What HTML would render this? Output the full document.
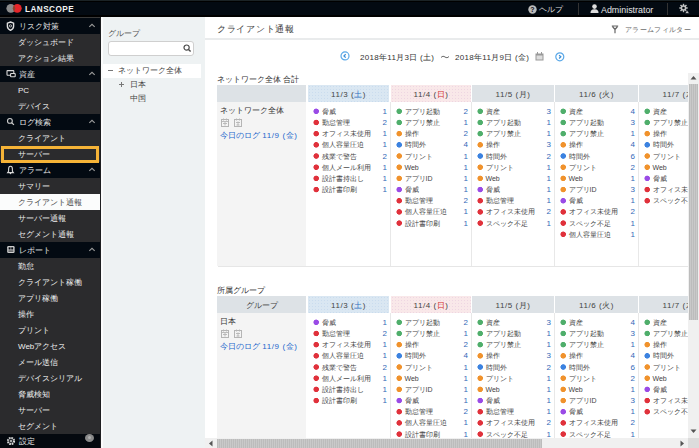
<!DOCTYPE html><html><head><meta charset="utf-8"><style>
*{margin:0;padding:0;box-sizing:border-box}
html,body{width:699px;height:448px;overflow:hidden;background:#fff;font-family:"Liberation Sans",sans-serif;position:relative}
div{position:absolute;white-space:nowrap}
.sh .st,.sh .car{position:absolute}
.j{display:inline-block;text-align:justify;text-align-last:justify;white-space:nowrap}
.top{left:0;top:0;width:699px;height:17px;background:#030a12;border-top:1px solid #1b2326;border-bottom:2px solid #000;box-shadow:inset 0 1px 0 #000}
.sb{left:0;top:17px;width:101px;height:431px;background:#2b2b2d}
.sh{left:0;width:101px;height:16px;background:#030a12;color:#e6e6e6;font-size:8px;line-height:17px}
.sh .st{left:19px;top:0}
.sic{position:absolute;left:6px;top:3px}
.car{left:87.8px;top:4.5px}
.si{left:0;width:101px;height:16px;color:#eeeeee;font-size:8px;line-height:17px;padding-left:18px}
.si.act{background:#fbfcfc;color:#4a4a4a}
.gp{left:101px;top:17px;width:104px;height:431px;background:#eef2f3}
.main{left:205px;top:17px;width:494px;height:431px;background:#fff}
.hd{height:17px;background:#dde2e6;color:#444;font-size:8px;line-height:19px;text-align:center;letter-spacing:0.55px}
.hd.sat{background-color:#dae7f2;background-image:radial-gradient(circle,#cadcee 0.7px,transparent 1px);background-size:3px 3px}
.hd.sun{background-color:#f9e8e9;background-image:radial-gradient(circle,#eed6e2 0.7px,transparent 1px);background-size:3px 3px}
.lc{background:#f4f4f4}
.lbl{left:217px;font-size:8px;color:#333;line-height:10px}
.lname{font-size:8px;color:#333;line-height:10px}
.link{font-size:8px;color:#2467cc;line-height:10px}
.ico{width:7px;height:8px;border:1px solid #bbb}
.bb{height:1px;background:#e6e6e6}
.vb{width:1px;background:#e8e8e8}
.dot{width:9px;height:9px}
.it{font-size:7px;color:#444;line-height:11px}
.num{width:19px;text-align:right;font-size:8px;color:#3468b8;line-height:11px}
</style></head><body>
<div class="top"></div>
<svg style="position:absolute;left:5px;top:3px" width="18" height="11" viewBox="0 0 18 11"><defs><clipPath id="cg"><circle cx="5.8" cy="5.3" r="4.4"></circle></clipPath></defs><circle cx="5.8" cy="5.3" r="4.4" fill="#8c8c8c"></circle><circle cx="12.3" cy="5.3" r="4.4" fill="#e5262a"></circle><circle cx="12.3" cy="5.3" r="4.4" fill="#8a4630" clip-path="url(#cg)"></circle></svg>
<div style="left:25px;top:4px;font-size:8.2px;letter-spacing:0.45px;font-weight:bold;color:#f4f4f4;line-height:11px">LANSCOPE</div>
<svg style="position:absolute;left:528px;top:5px" width="9" height="9" viewBox="0 0 9 9"><circle cx="4.5" cy="4.5" r="4.2" fill="#bbb"></circle><text x="4.5" y="7.3" font-size="7" font-weight="bold" text-anchor="middle" fill="#0a0d14" font-family="Liberation Sans">?</text></svg>
<div style="left:539px;top:4px;font-size:8px;color:#ddd;line-height:11px"><span class="j" style="width: 24px;">ヘルプ</span></div>
<div style="left:578px;top:3px;width:1px;height:12px;background:#333"></div>
<svg style="position:absolute;left:590px;top:4px" width="9" height="9" viewBox="0 0 9 9"><circle cx="4.5" cy="2.6" r="2.3" fill="#ddd"></circle><path d="M0.5 9 C0.5 5.8 2.5 5.2 4.5 5.2 C6.5 5.2 8.5 5.8 8.5 9Z" fill="#ddd"></path></svg>
<div style="left:601px;top:4.7px;font-size:8.9px;color:#e4e4e4;line-height:11px">Administrator</div>
<div style="left:667px;top:3px;width:1px;height:12px;background:#333"></div>
<svg style="position:absolute;left:679px;top:3px" width="12" height="11" viewBox="0 0 12 11"><g fill="#c4c4c4"><circle cx="4.5" cy="5" r="2.8"></circle><rect x="3.8" y="0.8" width="1.4" height="8.4"></rect><rect x="0.3" y="4.3" width="8.4" height="1.4"></rect><rect x="3.8" y="0.8" width="1.4" height="8.4" transform="rotate(45 4.5 5)"></rect><rect x="3.8" y="0.8" width="1.4" height="8.4" transform="rotate(-45 4.5 5)"></rect></g><circle cx="4.5" cy="5" r="1.3" fill="#030a12"></circle><path d="M6 10.5 L8 7 L10.5 10.5Z" fill="#c4c4c4" stroke="#030a12" stroke-width="0.6"></path></svg>

<div class="sb"></div><div style="left:0;top:17px;width:101px;height:1px;background:#3a3a3a"></div>
<div class="sh" style="top:18px"><svg class="sic" width="9" height="10" viewBox="0 0 9 10"><path d="M4.5 1 L7.6 2.2 V5.2 C7.6 7.2 6.2 8.5 4.5 9.3 C2.8 8.5 1.4 7.2 1.4 5.2 V2.2 Z" fill="none" stroke="#e0e0e0" stroke-width="1.4"></path><circle cx="4.5" cy="4.9" r="1.1" fill="none" stroke="#e0e0e0" stroke-width="0.8"></circle></svg><span class="st"><span class="j" style="width: 40px;">リスク対策</span></span><svg class="car" width="8" height="5" viewBox="0 0 8 5"><path d="M1.3 3.8 L4 1.3 L6.7 3.8" fill="none" stroke="#9a9a9a" stroke-width="1.1"></path></svg></div>
<div class="si" style="top:34px"><span class="j" style="width: 56px;">ダッシュボード</span></div>
<div class="si" style="top:50px"><span class="j" style="width: 56px;">アクション結果</span></div>
<div class="sh" style="top:66px"><svg class="sic" style="top:2.5px" width="10" height="9" viewBox="0 0 10 9"><rect x="1" y="1.6" width="6.8" height="4.6" rx="0.6" fill="none" stroke="#d8d8d8" stroke-width="1.1"></rect><rect x="4.6" y="4.5" width="4.6" height="3.2" rx="0.5" fill="#05090f" stroke="#d8d8d8" stroke-width="1.1"></rect></svg><span class="st"><span class="j" style="width: 16px;">資産</span></span><svg class="car" width="8" height="5" viewBox="0 0 8 5"><path d="M1.3 3.8 L4 1.3 L6.7 3.8" fill="none" stroke="#9a9a9a" stroke-width="1.1"></path></svg></div>
<div class="si" style="top:82px">PC</div>
<div class="si" style="top:98px"><span class="j" style="width: 32px;">デバイス</span></div>
<div class="sh" style="top:114px"><svg class="sic" width="9" height="9" viewBox="0 0 9 9"><circle cx="3.9" cy="3.9" r="2.4" fill="none" stroke="#cfcfcf" stroke-width="1.1"></circle><path d="M5.6 5.6 L7.9 7.9" stroke="#cfcfcf" stroke-width="1.3"></path></svg><span class="st"><span class="j" style="width: 32px;">ログ検索</span></span><svg class="car" width="8" height="5" viewBox="0 0 8 5"><path d="M1.3 3.8 L4 1.3 L6.7 3.8" fill="none" stroke="#9a9a9a" stroke-width="1.1"></path></svg></div>
<div class="si" style="top:130px"><span class="j" style="width: 48px;">クライアント</span></div>
<div class="si" style="top:146px"><span class="j" style="width: 32px;">サーバー</span></div>
<div class="sh" style="top:162px"><svg class="sic" width="9" height="10" viewBox="0 0 9 10"><path d="M4.5 1.2 C3 1.2 2.6 2.6 2.6 4 V6.2 L1.6 7.6 H7.4 L6.4 6.2 V4 C6.4 2.6 6 1.2 4.5 1.2Z" fill="none" stroke="#d8d8d8" stroke-width="1.1"></path><circle cx="4.5" cy="8.5" r="0.8" fill="#d8d8d8"></circle></svg><span class="st"><span class="j" style="width: 32px;">アラーム</span></span><svg class="car" width="8" height="5" viewBox="0 0 8 5"><path d="M1.3 3.8 L4 1.3 L6.7 3.8" fill="none" stroke="#9a9a9a" stroke-width="1.1"></path></svg></div>
<div class="si" style="top:178px"><span class="j" style="width: 32px;">サマリー</span></div>
<div class="si act" style="top:194px"><span class="j" style="width: 64px;">クライアント通報</span></div>
<div class="si" style="top:210px"><span class="j" style="width: 48px;">サーバー通報</span></div>
<div class="si" style="top:226px"><span class="j" style="width: 56px;">セグメント通報</span></div>
<div class="sh" style="top:242px"><svg class="sic" style="top:3px" width="10" height="10" viewBox="0 0 10 10"><rect x="1.2" y="1" width="7.4" height="7" rx="1.3" fill="#cfcfcf"></rect><rect x="2.6" y="2.3" width="2" height="2.2" fill="#05090f"></rect><rect x="5.2" y="2.3" width="2" height="2.2" fill="#05090f"></rect><rect x="2.4" y="5.6" width="5" height="0.9" fill="#05090f"></rect></svg><span class="st"><span class="j" style="width: 32px;">レポート</span></span><svg class="car" width="8" height="5" viewBox="0 0 8 5"><path d="M1.3 3.8 L4 1.3 L6.7 3.8" fill="none" stroke="#9a9a9a" stroke-width="1.1"></path></svg></div>
<div class="si" style="top:258px"><span class="j" style="width: 16px;">勤怠</span></div>
<div class="si" style="top:274px"><span class="j" style="width: 64px;">クライアント稼働</span></div>
<div class="si" style="top:290px"><span class="j" style="width: 40px;">アプリ稼働</span></div>
<div class="si" style="top:306px"><span class="j" style="width: 16px;">操作</span></div>
<div class="si" style="top:322px"><span class="j" style="width: 32px;">プリント</span></div>
<div class="si" style="top:338px"><span class="j" style="width: 48.4px;">Webアクセス</span></div>
<div class="si" style="top:354px"><span class="j" style="width: 40px;">メール送信</span></div>
<div class="si" style="top:370px"><span class="j" style="width: 64px;">デバイスシリアル</span></div>
<div class="si" style="top:386px"><span class="j" style="width: 32px;">脅威検知</span></div>
<div class="si" style="top:402px"><span class="j" style="width: 32px;">サーバー</span></div>
<div class="si" style="top:418px"><span class="j" style="width: 40px;">セグメント</span></div>
<div style="left:1px;top:146px;width:98px;height:17px;border:3px solid #f5b337"></div>
<div style="left:0;top:434px;width:101px;height:14px;background:#05090f"></div>
<svg style="position:absolute;left:6px;top:436px" width="10" height="10" viewBox="0 0 10 10"><circle cx="5" cy="5" r="3" fill="none" stroke="#ddd" stroke-width="2.2" stroke-dasharray="1.6 0.75"></circle><circle cx="5" cy="5" r="1" fill="#ddd"></circle></svg>
<div style="left:19px;top:436px;font-size:8px;color:#e6e6e6;line-height:12px"><span class="j" style="width: 16px;">設定</span></div>
<div style="left:85px;top:434px;width:9px;height:8px;border-radius:50%;background:#8a8a8a"></div><div style="left:88px;top:436px;width:3px;height:3px;border-radius:50%;background:#b0b0b0"></div>

<div class="gp"></div>
<div style="left:100px;top:17px;width:1px;height:431px;background:#1e1f21"></div><div style="left:101px;top:17px;width:2px;height:431px;background:#fbfcfc"></div>
<div style="left:108px;top:29px;font-size:8px;color:#555;line-height:10px"><span class="j" style="width: 32px;">グループ</span></div>
<div style="left:108px;top:41px;width:86px;height:15px;background:#fff;border:1px solid #cfcfcf;border-radius:3px"></div>
<svg style="position:absolute;left:182px;top:43px" width="10" height="10" viewBox="0 0 10 10"><circle cx="4.6" cy="4.6" r="2.6" fill="none" stroke="#4a4a4a" stroke-width="1.2"></circle><path d="M6.5 6.5 L8.6 8.6" stroke="#4a4a4a" stroke-width="1.4"></path></svg>
<div style="left:103px;top:64px;width:98px;height:14px;background:#fff"></div>
<div style="left:108px;top:70px;width:5px;height:1px;background:#777"></div>
<div style="left:118px;top:66px;font-size:8px;color:#444;line-height:10px"><span class="j" style="width: 64px;">ネットワーク全体</span></div>
<div style="left:119px;top:84px;width:5px;height:1px;background:#777"></div><div style="left:121px;top:82px;width:1px;height:5px;background:#777"></div>
<div style="left:130px;top:80px;font-size:8px;color:#444;line-height:10px"><span class="j" style="width: 16px;">日本</span></div>
<div style="left:130px;top:94px;font-size:8px;color:#444;line-height:10px"><span class="j" style="width: 16px;">中国</span></div>

<div class="main"></div>
<div style="left:217px;top:23px;font-size:9px;color:#3c3c3c;line-height:12px"><span class="j" style="width:77px">クライアント通報</span></div>
<div style="left:205px;top:38px;width:494px;height:2px;background:#e9ebec"></div>
<svg style="position:absolute;left:611px;top:25px" width="8" height="9" viewBox="0 0 8 9"><path d="M0.8 1 H7.2 M1.5 1.5 L4 4.5 L6.5 1.5 M4 4.5 V8.3" fill="none" stroke="#666" stroke-width="1.2"></path></svg>
<div style="left:625px;top:25px;font-size:7.2px;color:#666;line-height:10px"><span class="j" style="width:65.5px">アラームフィルター</span></div>

<svg style="position:absolute;left:340px;top:51.3px" width="10" height="10" viewBox="0 0 10 10"><circle cx="5" cy="4.9" r="4" fill="none" stroke="#5aa8e8" stroke-width="1.2"></circle><path d="M5.7 3.2 L4 4.9 L5.7 6.6" fill="none" stroke="#3b8fd8" stroke-width="1.3"></path></svg>
<div style="left:360px;top:53px;font-size:8px;letter-spacing:0.3px;color:#333;line-height:10px">2018年11月3日 (土)</div>
<svg style="position:absolute;left:440px;top:54px" width="10" height="6" viewBox="0 0 10 6"><path d="M1 3.6 C2.2 2 3.6 2 5 3 C6.4 4 7.8 4 9 2.4" fill="none" stroke="#555" stroke-width="0.9"></path></svg>
<div style="left:455px;top:53px;font-size:8px;letter-spacing:0.3px;color:#333;line-height:10px">2018年11月9日 (金)</div>
<svg style="position:absolute;left:535px;top:52px" width="9" height="9" viewBox="0 0 9 9"><rect x="0.5" y="1.5" width="8" height="7" fill="#999"></rect><rect x="1.5" y="3.5" width="6" height="4" fill="#ddd"></rect><rect x="2" y="0" width="1" height="2.5" fill="#999"></rect><rect x="6" y="0" width="1" height="2.5" fill="#999"></rect></svg>
<svg style="position:absolute;left:554.5px;top:51.5px" width="10" height="10" viewBox="0 0 10 10"><circle cx="4.8" cy="4.8" r="4" fill="none" stroke="#5aa8e8" stroke-width="1.2"></circle><path d="M4.1 3.1 L5.8 4.8 L4.1 6.5" fill="none" stroke="#3b8fd8" stroke-width="1.3"></path></svg>

<div class="lbl" style="top:75px"><span class="j" style="width: 82.3px;">ネットワーク全体 合計</span></div>
<div class="hd" style="left:217px;top:85px;width:89px"></div>
<div class="hd sat" style="left:308px;top:85px;width:81px">11/3 (<span style="color:#2f6fc0">土</span>)</div>
<div class="hd sun" style="left:391px;top:85px;width:80px">11/4 (<span style="color:#d0302f">日</span>)</div>
<div class="hd " style="left:472px;top:85px;width:82px">11/5 (月)</div>
<div class="hd " style="left:555px;top:85px;width:83px">11/6 (火)</div>
<div class="hd " style="left:639px;top:85px;width:82px">11/7 (水)</div>
<div class="lc" style="left:217px;top:102px;width:89px;height:164px"></div>
<div class="lname" style="left:220px;top:106px"><span class="j" style="width: 64px;">ネットワーク全体</span></div>
<svg style="position:absolute;left:221px;top:118px" width="8" height="9" viewBox="0 0 8 9"><rect x="0.5" y="1.5" width="7" height="7" fill="none" stroke="#b5b5b5" stroke-width="1"></rect><path d="M0.5 3.5 H7.5 M2.5 0.5 V2.5 M5.5 0.5 V2.5 M2 5.5 H6 M4 4 V7.5" stroke="#b5b5b5" stroke-width="0.9"></path></svg><svg style="position:absolute;left:234px;top:118px" width="8" height="9" viewBox="0 0 8 9"><rect x="0.5" y="1.5" width="7" height="7" fill="none" stroke="#b5b5b5" stroke-width="1"></rect><path d="M2.5 0.5 V2.5 M5.5 0.5 V2.5 M2 4.5 H6 M4 3.5 V7.5 M2.5 7 H5.5" stroke="#b5b5b5" stroke-width="0.9"></path></svg>
<div class="link" style="left:220px;top:131px">今日のログ <span style="letter-spacing:0.6px">11/9 (金)</span></div>
<div class="bb" style="left:218px;top:266px;width:470px"></div>
<div class="vb" style="left:390px;top:102px;height:164px"></div>
<div class="dot" style="left:312px;top:107px;background:radial-gradient(circle at 4.20px 4.30px,#9a4be6 2.4px,transparent 3.1px)"></div>
<div class="it" style="left:321.5px;top:105.8px"><span class="j" style="width: 14px;">脅威</span></div>
<div class="num" style="left:368px;top:105.8px">1</div>
<div class="dot" style="left:312px;top:118px;background:radial-gradient(circle at 4.20px 4.48px,#e0313b 2.4px,transparent 3.1px)"></div>
<div class="it" style="left:321.5px;top:117.0px"><span class="j" style="width: 28px;">勤怠管理</span></div>
<div class="num" style="left:368px;top:117.0px">2</div>
<div class="dot" style="left:312px;top:129px;background:radial-gradient(circle at 4.20px 4.66px,#e0313b 2.4px,transparent 3.1px)"></div>
<div class="it" style="left:321.5px;top:128.2px"><span class="j" style="width: 49px;">オフィス未使用</span></div>
<div class="num" style="left:368px;top:128.2px">1</div>
<div class="dot" style="left:312px;top:140px;background:radial-gradient(circle at 4.20px 4.84px,#e0313b 2.4px,transparent 3.1px)"></div>
<div class="it" style="left:321.5px;top:139.3px"><span class="j" style="width: 42px;">個人容量圧迫</span></div>
<div class="num" style="left:368px;top:139.3px">1</div>
<div class="dot" style="left:312px;top:152px;background:radial-gradient(circle at 4.20px 4.02px,#e0313b 2.4px,transparent 3.1px)"></div>
<div class="it" style="left:321.5px;top:150.5px"><span class="j" style="width: 35px;">残業で警告</span></div>
<div class="num" style="left:368px;top:150.5px">2</div>
<div class="dot" style="left:312px;top:163px;background:radial-gradient(circle at 4.20px 4.20px,#e0313b 2.4px,transparent 3.1px)"></div>
<div class="it" style="left:321.5px;top:161.7px"><span class="j" style="width: 49px;">個人メール利用</span></div>
<div class="num" style="left:368px;top:161.7px">1</div>
<div class="dot" style="left:312px;top:174px;background:radial-gradient(circle at 4.20px 4.38px,#e0313b 2.4px,transparent 3.1px)"></div>
<div class="it" style="left:321.5px;top:172.9px"><span class="j" style="width: 42px;">設計書持出し</span></div>
<div class="num" style="left:368px;top:172.9px">1</div>
<div class="dot" style="left:312px;top:185px;background:radial-gradient(circle at 4.20px 4.56px,#e0313b 2.4px,transparent 3.1px)"></div>
<div class="it" style="left:321.5px;top:184.1px"><span class="j" style="width: 35px;">設計書印刷</span></div>
<div class="num" style="left:368px;top:184.1px">1</div>
<div class="vb" style="left:471px;top:102px;height:164px"></div>
<div class="dot" style="left:395px;top:107px;background:radial-gradient(circle at 4.20px 4.30px,#4fae6b 2.4px,transparent 3.1px)"></div>
<div class="it" style="left:404.5px;top:105.8px"><span class="j" style="width: 35px;">アプリ起動</span></div>
<div class="num" style="left:449px;top:105.8px">2</div>
<div class="dot" style="left:395px;top:118px;background:radial-gradient(circle at 4.20px 4.48px,#4fae6b 2.4px,transparent 3.1px)"></div>
<div class="it" style="left:404.5px;top:117.0px"><span class="j" style="width: 35px;">アプリ禁止</span></div>
<div class="num" style="left:449px;top:117.0px">1</div>
<div class="dot" style="left:395px;top:129px;background:radial-gradient(circle at 4.20px 4.66px,#f0922c 2.4px,transparent 3.1px)"></div>
<div class="it" style="left:404.5px;top:128.2px"><span class="j" style="width: 14px;">操作</span></div>
<div class="num" style="left:449px;top:128.2px">2</div>
<div class="dot" style="left:395px;top:140px;background:radial-gradient(circle at 4.20px 4.84px,#3b82e0 2.4px,transparent 3.1px)"></div>
<div class="it" style="left:404.5px;top:139.3px"><span class="j" style="width: 21px;">時間外</span></div>
<div class="num" style="left:449px;top:139.3px">4</div>
<div class="dot" style="left:395px;top:152px;background:radial-gradient(circle at 4.20px 4.02px,#f0922c 2.4px,transparent 3.1px)"></div>
<div class="it" style="left:404.5px;top:150.5px"><span class="j" style="width: 28px;">プリント</span></div>
<div class="num" style="left:449px;top:150.5px">1</div>
<div class="dot" style="left:395px;top:163px;background:radial-gradient(circle at 4.20px 4.20px,#f0922c 2.4px,transparent 3.1px)"></div>
<div class="it" style="left:404.5px;top:161.7px">Web</div>
<div class="num" style="left:449px;top:161.7px">1</div>
<div class="dot" style="left:395px;top:174px;background:radial-gradient(circle at 4.20px 4.38px,#f0922c 2.4px,transparent 3.1px)"></div>
<div class="it" style="left:404.5px;top:172.9px"><span class="j" style="width: 28px;">アプリID</span></div>
<div class="num" style="left:449px;top:172.9px">1</div>
<div class="dot" style="left:395px;top:185px;background:radial-gradient(circle at 4.20px 4.56px,#9a4be6 2.4px,transparent 3.1px)"></div>
<div class="it" style="left:404.5px;top:184.1px"><span class="j" style="width: 14px;">脅威</span></div>
<div class="num" style="left:449px;top:184.1px">1</div>
<div class="dot" style="left:395px;top:196px;background:radial-gradient(circle at 4.20px 4.74px,#e0313b 2.4px,transparent 3.1px)"></div>
<div class="it" style="left:404.5px;top:195.2px"><span class="j" style="width: 28px;">勤怠管理</span></div>
<div class="num" style="left:449px;top:195.2px">2</div>
<div class="dot" style="left:395px;top:207px;background:radial-gradient(circle at 4.20px 4.92px,#e0313b 2.4px,transparent 3.1px)"></div>
<div class="it" style="left:404.5px;top:206.4px"><span class="j" style="width: 42px;">個人容量圧迫</span></div>
<div class="num" style="left:449px;top:206.4px">1</div>
<div class="dot" style="left:395px;top:219px;background:radial-gradient(circle at 4.20px 4.10px,#e0313b 2.4px,transparent 3.1px)"></div>
<div class="it" style="left:404.5px;top:217.6px"><span class="j" style="width: 35px;">設計書印刷</span></div>
<div class="num" style="left:449px;top:217.6px">1</div>
<div class="vb" style="left:554px;top:102px;height:164px"></div>
<div class="dot" style="left:476px;top:107px;background:radial-gradient(circle at 4.20px 4.30px,#4fae6b 2.4px,transparent 3.1px)"></div>
<div class="it" style="left:485.5px;top:105.8px"><span class="j" style="width: 14px;">資産</span></div>
<div class="num" style="left:532px;top:105.8px">3</div>
<div class="dot" style="left:476px;top:118px;background:radial-gradient(circle at 4.20px 4.48px,#4fae6b 2.4px,transparent 3.1px)"></div>
<div class="it" style="left:485.5px;top:117.0px"><span class="j" style="width: 35px;">アプリ起動</span></div>
<div class="num" style="left:532px;top:117.0px">1</div>
<div class="dot" style="left:476px;top:129px;background:radial-gradient(circle at 4.20px 4.66px,#4fae6b 2.4px,transparent 3.1px)"></div>
<div class="it" style="left:485.5px;top:128.2px"><span class="j" style="width: 35px;">アプリ禁止</span></div>
<div class="num" style="left:532px;top:128.2px">1</div>
<div class="dot" style="left:476px;top:140px;background:radial-gradient(circle at 4.20px 4.84px,#f0922c 2.4px,transparent 3.1px)"></div>
<div class="it" style="left:485.5px;top:139.3px"><span class="j" style="width: 14px;">操作</span></div>
<div class="num" style="left:532px;top:139.3px">3</div>
<div class="dot" style="left:476px;top:152px;background:radial-gradient(circle at 4.20px 4.02px,#3b82e0 2.4px,transparent 3.1px)"></div>
<div class="it" style="left:485.5px;top:150.5px"><span class="j" style="width: 21px;">時間外</span></div>
<div class="num" style="left:532px;top:150.5px">2</div>
<div class="dot" style="left:476px;top:163px;background:radial-gradient(circle at 4.20px 4.20px,#f0922c 2.4px,transparent 3.1px)"></div>
<div class="it" style="left:485.5px;top:161.7px"><span class="j" style="width: 28px;">プリント</span></div>
<div class="num" style="left:532px;top:161.7px">1</div>
<div class="dot" style="left:476px;top:174px;background:radial-gradient(circle at 4.20px 4.38px,#f0922c 2.4px,transparent 3.1px)"></div>
<div class="it" style="left:485.5px;top:172.9px">Web</div>
<div class="num" style="left:532px;top:172.9px">1</div>
<div class="dot" style="left:476px;top:185px;background:radial-gradient(circle at 4.20px 4.56px,#9a4be6 2.4px,transparent 3.1px)"></div>
<div class="it" style="left:485.5px;top:184.1px"><span class="j" style="width: 14px;">脅威</span></div>
<div class="num" style="left:532px;top:184.1px">1</div>
<div class="dot" style="left:476px;top:196px;background:radial-gradient(circle at 4.20px 4.74px,#e0313b 2.4px,transparent 3.1px)"></div>
<div class="it" style="left:485.5px;top:195.2px"><span class="j" style="width: 28px;">勤怠管理</span></div>
<div class="num" style="left:532px;top:195.2px">1</div>
<div class="dot" style="left:476px;top:207px;background:radial-gradient(circle at 4.20px 4.92px,#e0313b 2.4px,transparent 3.1px)"></div>
<div class="it" style="left:485.5px;top:206.4px"><span class="j" style="width: 49px;">オフィス未使用</span></div>
<div class="num" style="left:532px;top:206.4px">2</div>
<div class="dot" style="left:476px;top:219px;background:radial-gradient(circle at 4.20px 4.10px,#e0313b 2.4px,transparent 3.1px)"></div>
<div class="it" style="left:485.5px;top:217.6px"><span class="j" style="width: 42px;">スペック不足</span></div>
<div class="num" style="left:532px;top:217.6px">1</div>
<div class="vb" style="left:638px;top:102px;height:164px"></div>
<div class="dot" style="left:559px;top:107px;background:radial-gradient(circle at 4.20px 4.30px,#4fae6b 2.4px,transparent 3.1px)"></div>
<div class="it" style="left:568.5px;top:105.8px"><span class="j" style="width: 14px;">資産</span></div>
<div class="num" style="left:616px;top:105.8px">4</div>
<div class="dot" style="left:559px;top:118px;background:radial-gradient(circle at 4.20px 4.48px,#4fae6b 2.4px,transparent 3.1px)"></div>
<div class="it" style="left:568.5px;top:117.0px"><span class="j" style="width: 35px;">アプリ起動</span></div>
<div class="num" style="left:616px;top:117.0px">3</div>
<div class="dot" style="left:559px;top:129px;background:radial-gradient(circle at 4.20px 4.66px,#4fae6b 2.4px,transparent 3.1px)"></div>
<div class="it" style="left:568.5px;top:128.2px"><span class="j" style="width: 35px;">アプリ禁止</span></div>
<div class="num" style="left:616px;top:128.2px">1</div>
<div class="dot" style="left:559px;top:140px;background:radial-gradient(circle at 4.20px 4.84px,#f0922c 2.4px,transparent 3.1px)"></div>
<div class="it" style="left:568.5px;top:139.3px"><span class="j" style="width: 14px;">操作</span></div>
<div class="num" style="left:616px;top:139.3px">4</div>
<div class="dot" style="left:559px;top:152px;background:radial-gradient(circle at 4.20px 4.02px,#3b82e0 2.4px,transparent 3.1px)"></div>
<div class="it" style="left:568.5px;top:150.5px"><span class="j" style="width: 21px;">時間外</span></div>
<div class="num" style="left:616px;top:150.5px">6</div>
<div class="dot" style="left:559px;top:163px;background:radial-gradient(circle at 4.20px 4.20px,#f0922c 2.4px,transparent 3.1px)"></div>
<div class="it" style="left:568.5px;top:161.7px"><span class="j" style="width: 28px;">プリント</span></div>
<div class="num" style="left:616px;top:161.7px">2</div>
<div class="dot" style="left:559px;top:174px;background:radial-gradient(circle at 4.20px 4.38px,#f0922c 2.4px,transparent 3.1px)"></div>
<div class="it" style="left:568.5px;top:172.9px">Web</div>
<div class="num" style="left:616px;top:172.9px">1</div>
<div class="dot" style="left:559px;top:185px;background:radial-gradient(circle at 4.20px 4.56px,#f0922c 2.4px,transparent 3.1px)"></div>
<div class="it" style="left:568.5px;top:184.1px"><span class="j" style="width: 28px;">アプリID</span></div>
<div class="num" style="left:616px;top:184.1px">3</div>
<div class="dot" style="left:559px;top:196px;background:radial-gradient(circle at 4.20px 4.74px,#9a4be6 2.4px,transparent 3.1px)"></div>
<div class="it" style="left:568.5px;top:195.2px"><span class="j" style="width: 14px;">脅威</span></div>
<div class="num" style="left:616px;top:195.2px">1</div>
<div class="dot" style="left:559px;top:207px;background:radial-gradient(circle at 4.20px 4.92px,#e0313b 2.4px,transparent 3.1px)"></div>
<div class="it" style="left:568.5px;top:206.4px"><span class="j" style="width: 49px;">オフィス未使用</span></div>
<div class="num" style="left:616px;top:206.4px">2</div>
<div class="dot" style="left:559px;top:219px;background:radial-gradient(circle at 4.20px 4.10px,#e0313b 2.4px,transparent 3.1px)"></div>
<div class="it" style="left:568.5px;top:217.6px"><span class="j" style="width: 42px;">スペック不足</span></div>
<div class="num" style="left:616px;top:217.6px">1</div>
<div class="dot" style="left:559px;top:230px;background:radial-gradient(circle at 4.20px 4.28px,#e0313b 2.4px,transparent 3.1px)"></div>
<div class="it" style="left:568.5px;top:228.8px"><span class="j" style="width: 42px;">個人容量圧迫</span></div>
<div class="num" style="left:616px;top:228.8px">1</div>
<div class="vb" style="left:721px;top:102px;height:164px"></div>
<div class="dot" style="left:643px;top:107px;background:radial-gradient(circle at 4.20px 4.30px,#4fae6b 2.4px,transparent 3.1px)"></div>
<div class="it" style="left:652.5px;top:105.8px"><span class="j" style="width: 14px;">資産</span></div>
<div class="dot" style="left:643px;top:118px;background:radial-gradient(circle at 4.20px 4.48px,#4fae6b 2.4px,transparent 3.1px)"></div>
<div class="it" style="left:652.5px;top:117.0px"><span class="j" style="width: 35px;">アプリ禁止</span></div>
<div class="dot" style="left:643px;top:129px;background:radial-gradient(circle at 4.20px 4.66px,#f0922c 2.4px,transparent 3.1px)"></div>
<div class="it" style="left:652.5px;top:128.2px"><span class="j" style="width: 14px;">操作</span></div>
<div class="dot" style="left:643px;top:140px;background:radial-gradient(circle at 4.20px 4.84px,#3b82e0 2.4px,transparent 3.1px)"></div>
<div class="it" style="left:652.5px;top:139.3px"><span class="j" style="width: 21px;">時間外</span></div>
<div class="dot" style="left:643px;top:152px;background:radial-gradient(circle at 4.20px 4.02px,#f0922c 2.4px,transparent 3.1px)"></div>
<div class="it" style="left:652.5px;top:150.5px"><span class="j" style="width: 28px;">プリント</span></div>
<div class="dot" style="left:643px;top:163px;background:radial-gradient(circle at 4.20px 4.20px,#f0922c 2.4px,transparent 3.1px)"></div>
<div class="it" style="left:652.5px;top:161.7px">Web</div>
<div class="dot" style="left:643px;top:174px;background:radial-gradient(circle at 4.20px 4.38px,#9a4be6 2.4px,transparent 3.1px)"></div>
<div class="it" style="left:652.5px;top:172.9px"><span class="j" style="width: 14px;">脅威</span></div>
<div class="dot" style="left:643px;top:185px;background:radial-gradient(circle at 4.20px 4.56px,#e0313b 2.4px,transparent 3.1px)"></div>
<div class="it" style="left:652.5px;top:184.1px"><span class="j" style="width: 49px;">オフィス未使用</span></div>
<div class="dot" style="left:643px;top:196px;background:radial-gradient(circle at 4.20px 4.74px,#e0313b 2.4px,transparent 3.1px)"></div>
<div class="it" style="left:652.5px;top:195.2px"><span class="j" style="width: 42px;">スペック不足</span></div>
<div class="lbl" style="top:286px"><span class="j" style="width: 48px;">所属グループ</span></div>
<div class="hd" style="left:217px;top:296px;width:89px"><span style="font-size:8px;letter-spacing:0"><span class="j" style="width: 32px;">グループ</span></span></div>
<div class="hd sat" style="left:308px;top:296px;width:81px">11/3 (<span style="color:#2f6fc0">土</span>)</div>
<div class="hd sun" style="left:391px;top:296px;width:80px">11/4 (<span style="color:#d0302f">日</span>)</div>
<div class="hd " style="left:472px;top:296px;width:82px">11/5 (月)</div>
<div class="hd " style="left:555px;top:296px;width:83px">11/6 (火)</div>
<div class="hd " style="left:639px;top:296px;width:82px">11/7 (水)</div>
<div class="lc" style="left:217px;top:313px;width:89px;height:200px"></div>
<div class="lname" style="left:220px;top:317px"><span class="j" style="width: 16px;">日本</span></div>
<svg style="position:absolute;left:221px;top:329px" width="8" height="9" viewBox="0 0 8 9"><rect x="0.5" y="1.5" width="7" height="7" fill="none" stroke="#b5b5b5" stroke-width="1"></rect><path d="M0.5 3.5 H7.5 M2.5 0.5 V2.5 M5.5 0.5 V2.5 M2 5.5 H6 M4 4 V7.5" stroke="#b5b5b5" stroke-width="0.9"></path></svg><svg style="position:absolute;left:234px;top:329px" width="8" height="9" viewBox="0 0 8 9"><rect x="0.5" y="1.5" width="7" height="7" fill="none" stroke="#b5b5b5" stroke-width="1"></rect><path d="M2.5 0.5 V2.5 M5.5 0.5 V2.5 M2 4.5 H6 M4 3.5 V7.5 M2.5 7 H5.5" stroke="#b5b5b5" stroke-width="0.9"></path></svg>
<div class="link" style="left:220px;top:342px">今日のログ <span style="letter-spacing:0.6px">11/9 (金)</span></div>
<div class="bb" style="left:218px;top:513px;width:470px"></div>
<div class="vb" style="left:390px;top:313px;height:200px"></div>
<div class="dot" style="left:312px;top:318px;background:radial-gradient(circle at 4.20px 4.30px,#9a4be6 2.4px,transparent 3.1px)"></div>
<div class="it" style="left:321.5px;top:316.8px"><span class="j" style="width: 14px;">脅威</span></div>
<div class="num" style="left:368px;top:316.8px">1</div>
<div class="dot" style="left:312px;top:329px;background:radial-gradient(circle at 4.20px 4.48px,#e0313b 2.4px,transparent 3.1px)"></div>
<div class="it" style="left:321.5px;top:328.0px"><span class="j" style="width: 28px;">勤怠管理</span></div>
<div class="num" style="left:368px;top:328.0px">2</div>
<div class="dot" style="left:312px;top:340px;background:radial-gradient(circle at 4.20px 4.66px,#e0313b 2.4px,transparent 3.1px)"></div>
<div class="it" style="left:321.5px;top:339.2px"><span class="j" style="width: 49px;">オフィス未使用</span></div>
<div class="num" style="left:368px;top:339.2px">1</div>
<div class="dot" style="left:312px;top:351px;background:radial-gradient(circle at 4.20px 4.84px,#e0313b 2.4px,transparent 3.1px)"></div>
<div class="it" style="left:321.5px;top:350.3px"><span class="j" style="width: 42px;">個人容量圧迫</span></div>
<div class="num" style="left:368px;top:350.3px">1</div>
<div class="dot" style="left:312px;top:363px;background:radial-gradient(circle at 4.20px 4.02px,#e0313b 2.4px,transparent 3.1px)"></div>
<div class="it" style="left:321.5px;top:361.5px"><span class="j" style="width: 35px;">残業で警告</span></div>
<div class="num" style="left:368px;top:361.5px">2</div>
<div class="dot" style="left:312px;top:374px;background:radial-gradient(circle at 4.20px 4.20px,#e0313b 2.4px,transparent 3.1px)"></div>
<div class="it" style="left:321.5px;top:372.7px"><span class="j" style="width: 49px;">個人メール利用</span></div>
<div class="num" style="left:368px;top:372.7px">1</div>
<div class="dot" style="left:312px;top:385px;background:radial-gradient(circle at 4.20px 4.38px,#e0313b 2.4px,transparent 3.1px)"></div>
<div class="it" style="left:321.5px;top:383.9px"><span class="j" style="width: 42px;">設計書持出し</span></div>
<div class="num" style="left:368px;top:383.9px">1</div>
<div class="dot" style="left:312px;top:396px;background:radial-gradient(circle at 4.20px 4.56px,#e0313b 2.4px,transparent 3.1px)"></div>
<div class="it" style="left:321.5px;top:395.1px"><span class="j" style="width: 35px;">設計書印刷</span></div>
<div class="num" style="left:368px;top:395.1px">1</div>
<div class="vb" style="left:471px;top:313px;height:200px"></div>
<div class="dot" style="left:395px;top:318px;background:radial-gradient(circle at 4.20px 4.30px,#4fae6b 2.4px,transparent 3.1px)"></div>
<div class="it" style="left:404.5px;top:316.8px"><span class="j" style="width: 35px;">アプリ起動</span></div>
<div class="num" style="left:449px;top:316.8px">2</div>
<div class="dot" style="left:395px;top:329px;background:radial-gradient(circle at 4.20px 4.48px,#4fae6b 2.4px,transparent 3.1px)"></div>
<div class="it" style="left:404.5px;top:328.0px"><span class="j" style="width: 35px;">アプリ禁止</span></div>
<div class="num" style="left:449px;top:328.0px">1</div>
<div class="dot" style="left:395px;top:340px;background:radial-gradient(circle at 4.20px 4.66px,#f0922c 2.4px,transparent 3.1px)"></div>
<div class="it" style="left:404.5px;top:339.2px"><span class="j" style="width: 14px;">操作</span></div>
<div class="num" style="left:449px;top:339.2px">2</div>
<div class="dot" style="left:395px;top:351px;background:radial-gradient(circle at 4.20px 4.84px,#3b82e0 2.4px,transparent 3.1px)"></div>
<div class="it" style="left:404.5px;top:350.3px"><span class="j" style="width: 21px;">時間外</span></div>
<div class="num" style="left:449px;top:350.3px">4</div>
<div class="dot" style="left:395px;top:363px;background:radial-gradient(circle at 4.20px 4.02px,#f0922c 2.4px,transparent 3.1px)"></div>
<div class="it" style="left:404.5px;top:361.5px"><span class="j" style="width: 28px;">プリント</span></div>
<div class="num" style="left:449px;top:361.5px">1</div>
<div class="dot" style="left:395px;top:374px;background:radial-gradient(circle at 4.20px 4.20px,#f0922c 2.4px,transparent 3.1px)"></div>
<div class="it" style="left:404.5px;top:372.7px">Web</div>
<div class="num" style="left:449px;top:372.7px">1</div>
<div class="dot" style="left:395px;top:385px;background:radial-gradient(circle at 4.20px 4.38px,#f0922c 2.4px,transparent 3.1px)"></div>
<div class="it" style="left:404.5px;top:383.9px"><span class="j" style="width: 28px;">アプリID</span></div>
<div class="num" style="left:449px;top:383.9px">1</div>
<div class="dot" style="left:395px;top:396px;background:radial-gradient(circle at 4.20px 4.56px,#9a4be6 2.4px,transparent 3.1px)"></div>
<div class="it" style="left:404.5px;top:395.1px"><span class="j" style="width: 14px;">脅威</span></div>
<div class="num" style="left:449px;top:395.1px">1</div>
<div class="dot" style="left:395px;top:407px;background:radial-gradient(circle at 4.20px 4.74px,#e0313b 2.4px,transparent 3.1px)"></div>
<div class="it" style="left:404.5px;top:406.2px"><span class="j" style="width: 28px;">勤怠管理</span></div>
<div class="num" style="left:449px;top:406.2px">2</div>
<div class="dot" style="left:395px;top:418px;background:radial-gradient(circle at 4.20px 4.92px,#e0313b 2.4px,transparent 3.1px)"></div>
<div class="it" style="left:404.5px;top:417.4px"><span class="j" style="width: 42px;">個人容量圧迫</span></div>
<div class="num" style="left:449px;top:417.4px">1</div>
<div class="dot" style="left:395px;top:430px;background:radial-gradient(circle at 4.20px 4.10px,#e0313b 2.4px,transparent 3.1px)"></div>
<div class="it" style="left:404.5px;top:428.6px"><span class="j" style="width: 35px;">設計書印刷</span></div>
<div class="num" style="left:449px;top:428.6px">1</div>
<div class="vb" style="left:554px;top:313px;height:200px"></div>
<div class="dot" style="left:476px;top:318px;background:radial-gradient(circle at 4.20px 4.30px,#4fae6b 2.4px,transparent 3.1px)"></div>
<div class="it" style="left:485.5px;top:316.8px"><span class="j" style="width: 14px;">資産</span></div>
<div class="num" style="left:532px;top:316.8px">3</div>
<div class="dot" style="left:476px;top:329px;background:radial-gradient(circle at 4.20px 4.48px,#4fae6b 2.4px,transparent 3.1px)"></div>
<div class="it" style="left:485.5px;top:328.0px"><span class="j" style="width: 35px;">アプリ起動</span></div>
<div class="num" style="left:532px;top:328.0px">1</div>
<div class="dot" style="left:476px;top:340px;background:radial-gradient(circle at 4.20px 4.66px,#4fae6b 2.4px,transparent 3.1px)"></div>
<div class="it" style="left:485.5px;top:339.2px"><span class="j" style="width: 35px;">アプリ禁止</span></div>
<div class="num" style="left:532px;top:339.2px">1</div>
<div class="dot" style="left:476px;top:351px;background:radial-gradient(circle at 4.20px 4.84px,#f0922c 2.4px,transparent 3.1px)"></div>
<div class="it" style="left:485.5px;top:350.3px"><span class="j" style="width: 14px;">操作</span></div>
<div class="num" style="left:532px;top:350.3px">3</div>
<div class="dot" style="left:476px;top:363px;background:radial-gradient(circle at 4.20px 4.02px,#3b82e0 2.4px,transparent 3.1px)"></div>
<div class="it" style="left:485.5px;top:361.5px"><span class="j" style="width: 21px;">時間外</span></div>
<div class="num" style="left:532px;top:361.5px">2</div>
<div class="dot" style="left:476px;top:374px;background:radial-gradient(circle at 4.20px 4.20px,#f0922c 2.4px,transparent 3.1px)"></div>
<div class="it" style="left:485.5px;top:372.7px"><span class="j" style="width: 28px;">プリント</span></div>
<div class="num" style="left:532px;top:372.7px">1</div>
<div class="dot" style="left:476px;top:385px;background:radial-gradient(circle at 4.20px 4.38px,#f0922c 2.4px,transparent 3.1px)"></div>
<div class="it" style="left:485.5px;top:383.9px">Web</div>
<div class="num" style="left:532px;top:383.9px">1</div>
<div class="dot" style="left:476px;top:396px;background:radial-gradient(circle at 4.20px 4.56px,#9a4be6 2.4px,transparent 3.1px)"></div>
<div class="it" style="left:485.5px;top:395.1px"><span class="j" style="width: 14px;">脅威</span></div>
<div class="num" style="left:532px;top:395.1px">1</div>
<div class="dot" style="left:476px;top:407px;background:radial-gradient(circle at 4.20px 4.74px,#e0313b 2.4px,transparent 3.1px)"></div>
<div class="it" style="left:485.5px;top:406.2px"><span class="j" style="width: 28px;">勤怠管理</span></div>
<div class="num" style="left:532px;top:406.2px">1</div>
<div class="dot" style="left:476px;top:418px;background:radial-gradient(circle at 4.20px 4.92px,#e0313b 2.4px,transparent 3.1px)"></div>
<div class="it" style="left:485.5px;top:417.4px"><span class="j" style="width: 49px;">オフィス未使用</span></div>
<div class="num" style="left:532px;top:417.4px">2</div>
<div class="dot" style="left:476px;top:430px;background:radial-gradient(circle at 4.20px 4.10px,#e0313b 2.4px,transparent 3.1px)"></div>
<div class="it" style="left:485.5px;top:428.6px"><span class="j" style="width: 42px;">スペック不足</span></div>
<div class="num" style="left:532px;top:428.6px">1</div>
<div class="vb" style="left:638px;top:313px;height:200px"></div>
<div class="dot" style="left:559px;top:318px;background:radial-gradient(circle at 4.20px 4.30px,#4fae6b 2.4px,transparent 3.1px)"></div>
<div class="it" style="left:568.5px;top:316.8px"><span class="j" style="width: 14px;">資産</span></div>
<div class="num" style="left:616px;top:316.8px">4</div>
<div class="dot" style="left:559px;top:329px;background:radial-gradient(circle at 4.20px 4.48px,#4fae6b 2.4px,transparent 3.1px)"></div>
<div class="it" style="left:568.5px;top:328.0px"><span class="j" style="width: 35px;">アプリ起動</span></div>
<div class="num" style="left:616px;top:328.0px">3</div>
<div class="dot" style="left:559px;top:340px;background:radial-gradient(circle at 4.20px 4.66px,#4fae6b 2.4px,transparent 3.1px)"></div>
<div class="it" style="left:568.5px;top:339.2px"><span class="j" style="width: 35px;">アプリ禁止</span></div>
<div class="num" style="left:616px;top:339.2px">1</div>
<div class="dot" style="left:559px;top:351px;background:radial-gradient(circle at 4.20px 4.84px,#f0922c 2.4px,transparent 3.1px)"></div>
<div class="it" style="left:568.5px;top:350.3px"><span class="j" style="width: 14px;">操作</span></div>
<div class="num" style="left:616px;top:350.3px">4</div>
<div class="dot" style="left:559px;top:363px;background:radial-gradient(circle at 4.20px 4.02px,#3b82e0 2.4px,transparent 3.1px)"></div>
<div class="it" style="left:568.5px;top:361.5px"><span class="j" style="width: 21px;">時間外</span></div>
<div class="num" style="left:616px;top:361.5px">6</div>
<div class="dot" style="left:559px;top:374px;background:radial-gradient(circle at 4.20px 4.20px,#f0922c 2.4px,transparent 3.1px)"></div>
<div class="it" style="left:568.5px;top:372.7px"><span class="j" style="width: 28px;">プリント</span></div>
<div class="num" style="left:616px;top:372.7px">2</div>
<div class="dot" style="left:559px;top:385px;background:radial-gradient(circle at 4.20px 4.38px,#f0922c 2.4px,transparent 3.1px)"></div>
<div class="it" style="left:568.5px;top:383.9px">Web</div>
<div class="num" style="left:616px;top:383.9px">1</div>
<div class="dot" style="left:559px;top:396px;background:radial-gradient(circle at 4.20px 4.56px,#f0922c 2.4px,transparent 3.1px)"></div>
<div class="it" style="left:568.5px;top:395.1px"><span class="j" style="width: 28px;">アプリID</span></div>
<div class="num" style="left:616px;top:395.1px">3</div>
<div class="dot" style="left:559px;top:407px;background:radial-gradient(circle at 4.20px 4.74px,#9a4be6 2.4px,transparent 3.1px)"></div>
<div class="it" style="left:568.5px;top:406.2px"><span class="j" style="width: 14px;">脅威</span></div>
<div class="num" style="left:616px;top:406.2px">1</div>
<div class="dot" style="left:559px;top:418px;background:radial-gradient(circle at 4.20px 4.92px,#e0313b 2.4px,transparent 3.1px)"></div>
<div class="it" style="left:568.5px;top:417.4px"><span class="j" style="width: 49px;">オフィス未使用</span></div>
<div class="num" style="left:616px;top:417.4px">2</div>
<div class="dot" style="left:559px;top:430px;background:radial-gradient(circle at 4.20px 4.10px,#e0313b 2.4px,transparent 3.1px)"></div>
<div class="it" style="left:568.5px;top:428.6px"><span class="j" style="width: 42px;">スペック不足</span></div>
<div class="num" style="left:616px;top:428.6px">1</div>
<div class="dot" style="left:559px;top:441px;background:radial-gradient(circle at 4.20px 4.28px,#e0313b 2.4px,transparent 3.1px)"></div>
<div class="it" style="left:568.5px;top:439.8px"><span class="j" style="width: 42px;">個人容量圧迫</span></div>
<div class="num" style="left:616px;top:439.8px">1</div>
<div class="vb" style="left:721px;top:313px;height:200px"></div>
<div class="dot" style="left:643px;top:318px;background:radial-gradient(circle at 4.20px 4.30px,#4fae6b 2.4px,transparent 3.1px)"></div>
<div class="it" style="left:652.5px;top:316.8px"><span class="j" style="width: 14px;">資産</span></div>
<div class="dot" style="left:643px;top:329px;background:radial-gradient(circle at 4.20px 4.48px,#4fae6b 2.4px,transparent 3.1px)"></div>
<div class="it" style="left:652.5px;top:328.0px"><span class="j" style="width: 35px;">アプリ禁止</span></div>
<div class="dot" style="left:643px;top:340px;background:radial-gradient(circle at 4.20px 4.66px,#f0922c 2.4px,transparent 3.1px)"></div>
<div class="it" style="left:652.5px;top:339.2px"><span class="j" style="width: 14px;">操作</span></div>
<div class="dot" style="left:643px;top:351px;background:radial-gradient(circle at 4.20px 4.84px,#3b82e0 2.4px,transparent 3.1px)"></div>
<div class="it" style="left:652.5px;top:350.3px"><span class="j" style="width: 21px;">時間外</span></div>
<div class="dot" style="left:643px;top:363px;background:radial-gradient(circle at 4.20px 4.02px,#f0922c 2.4px,transparent 3.1px)"></div>
<div class="it" style="left:652.5px;top:361.5px"><span class="j" style="width: 28px;">プリント</span></div>
<div class="dot" style="left:643px;top:374px;background:radial-gradient(circle at 4.20px 4.20px,#f0922c 2.4px,transparent 3.1px)"></div>
<div class="it" style="left:652.5px;top:372.7px">Web</div>
<div class="dot" style="left:643px;top:385px;background:radial-gradient(circle at 4.20px 4.38px,#9a4be6 2.4px,transparent 3.1px)"></div>
<div class="it" style="left:652.5px;top:383.9px"><span class="j" style="width: 14px;">脅威</span></div>
<div class="dot" style="left:643px;top:396px;background:radial-gradient(circle at 4.20px 4.56px,#e0313b 2.4px,transparent 3.1px)"></div>
<div class="it" style="left:652.5px;top:395.1px"><span class="j" style="width: 49px;">オフィス未使用</span></div>
<div class="dot" style="left:643px;top:407px;background:radial-gradient(circle at 4.20px 4.74px,#e0313b 2.4px,transparent 3.1px)"></div>
<div class="it" style="left:652.5px;top:406.2px"><span class="j" style="width: 42px;">スペック不足</span></div>

<div style="left:205px;top:438px;width:483px;height:10px;background:#f0f0f0"></div>
<div style="left:217px;top:438.5px;width:325px;height:9.5px;background:repeating-linear-gradient(90deg,#bcbcbc 0 1px,#c9c9c9 1px 2px)"></div>
<svg style="position:absolute;left:208px;top:440px" width="6" height="7" viewBox="0 0 6 7"><path d="M4.5 0.5 L1 3.5 L4.5 6.5Z" fill="#555"></path></svg>
<svg style="position:absolute;left:679px;top:440px" width="6" height="7" viewBox="0 0 6 7"><path d="M1.5 0.5 L5 3.5 L1.5 6.5Z" fill="#555"></path></svg>
<div style="left:688px;top:73px;width:11px;height:365px;background:#f0f0f0"></div>
<div style="left:688.5px;top:84px;width:9.5px;height:236px;background:repeating-linear-gradient(90deg,#bcbcbc 0 1px,#c9c9c9 1px 2px)"></div>
<svg style="position:absolute;left:690px;top:75px" width="7" height="6" viewBox="0 0 7 6"><path d="M0.5 4.5 L3.5 1 L6.5 4.5Z" fill="#555"></path></svg>
<svg style="position:absolute;left:690px;top:428px" width="7" height="6" viewBox="0 0 7 6"><path d="M0.5 1.5 L3.5 5 L6.5 1.5Z" fill="#555"></path></svg>
<div style="left:688px;top:438px;width:11px;height:10px;background:#dcdcdc"></div>
</body></html>
